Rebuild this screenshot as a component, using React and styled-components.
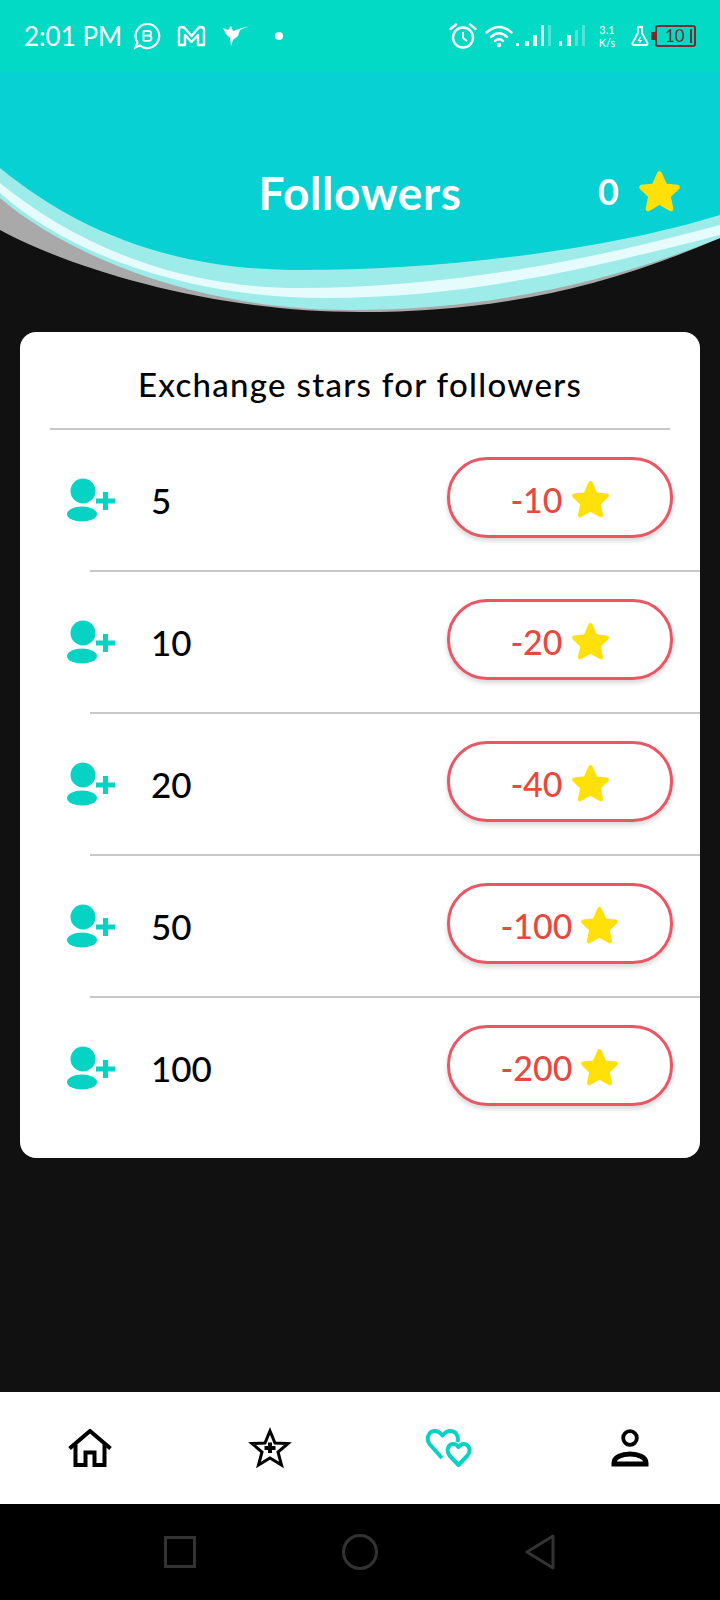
import React from 'react'
import styled, { createGlobalStyle } from 'styled-components'

const GlobalStyle = createGlobalStyle`
  html, body { margin: 0; padding: 0; background: #111111; }
  * { box-sizing: border-box; }
  body { font-family: Lato, "Open Sans", sans-serif; }
`

const Page = styled.div`
  width: 720px;
  height: 1600px;
  display: flex;
  flex-direction: column;
  background: #111111;
  overflow: hidden;
`

const StatusBar = styled.div`
  height: 72px;
  flex-shrink: 0;
  background: #02dac5;
  display: flex;
  align-items: center;
  padding: 0 24px 0 24px;
  color: #ffffff;
  position: relative;
  z-index: 1;
`

const Clock = styled.span`
  font-size: 26px;
  line-height: 1;
  margin-right: 11px;
  white-space: nowrap;
`

const StatusIcon = styled.svg`
  display: block;
  flex-shrink: 0;
  margin-left: ${(props) => props.$gap || 0}px;
`

const Grow = styled.div`
  flex: 1;
`

const Speed = styled.div`
  display: flex;
  flex-direction: column;
  align-items: center;
  font-size: 11px;
  line-height: 13px;
  margin-left: 10px;
  width: 22px;
`

const Battery = styled.div`
  width: 41px;
  height: 22px;
  margin-left: 6px;
  border: 2px solid #7a2a2c;
  border-radius: 3px;
  color: #7a2a2c;
  font-size: 17px;
  line-height: 18px;
  padding-left: 8px;
  position: relative;
  &::before {
    content: '';
    position: absolute;
    left: -6px;
    top: 5px;
    width: 4px;
    height: 8px;
    background: #7a2a2c;
  }
  &::after {
    content: '';
    position: absolute;
    right: 2px;
    top: 2px;
    width: 2px;
    height: 14px;
    background: #7a2a2c;
  }
`

const Header = styled.header`
  height: 260px;
  flex-shrink: 0;
  position: relative;
`

const Wave = styled.svg`
  position: absolute;
  left: 0;
  top: 0;
  display: block;
`

const HeaderRow = styled.div`
  position: relative;
  display: grid;
  grid-template-columns: 1fr auto 1fr;
  align-items: center;
  padding-top: 92px;
  color: #ffffff;
`

const Title = styled.h1`
  grid-column: 2;
  margin: 0;
  font-size: 46px;
  line-height: 58px;
  font-weight: 700;
  letter-spacing: 0.6px;
`

const Balance = styled.div`
  display: flex;
  justify-content: flex-end;
  align-items: center;
  gap: 19px;
  padding-right: 39px;
  padding-bottom: 4px;
  font-size: 36px;
  font-weight: 700;
`

const Card = styled.section`
  margin: 0 20px;
  background: #ffffff;
  border-radius: 16px;
  padding-bottom: 18px;
  overflow: hidden;
`

const CardTitle = styled.h2`
  margin: 0 30px;
  height: 98px;
  padding-top: 8px;
  display: flex;
  align-items: center;
  justify-content: center;
  border-bottom: 2px solid #c8c8c8;
  font-size: 33px;
  font-weight: 500;
  letter-spacing: 1.3px;
  color: #000000;
`

const Row = styled.div`
  position: relative;
  height: 142px;
  display: flex;
  align-items: center;
  padding: 0 27px 2px 46px;
  ${(props) => !props.$last && `
    &::after {
      content: '';
      position: absolute;
      left: 70px;
      right: 0;
      bottom: 0;
      height: 2px;
      background: #c8c8c8;
    }
  `}
`

const Count = styled.span`
  margin-left: 35px;
  flex: 1;
  font-size: 35px;
  font-weight: 500;
  color: #000000;
`

const ExchangeButton = styled.button`
  width: 226px;
  height: 81px;
  margin-bottom: 6px;
  border: 3.5px solid #ec5564;
  border-radius: 40px;
  background: #ffffff;
  box-shadow: 0 3px 5px rgba(0, 0, 0, 0.16);
  display: flex;
  align-items: center;
  justify-content: center;
  gap: 8px;
  padding: 4px 0 0;
  font-family: inherit;
  font-size: 34px;
  font-weight: 500;
  color: #e8493f;
`

const Spacer = styled.div`
  flex: 1;
`

const BottomNav = styled.nav`
  height: 112px;
  flex-shrink: 0;
  background: #ffffff;
  display: grid;
  grid-template-columns: repeat(4, 1fr);
  align-items: center;
  justify-items: center;
`

const SystemNav = styled.div`
  height: 96px;
  flex-shrink: 0;
  background: #000000;
  display: grid;
  grid-template-columns: 180px 180px 180px;
  justify-content: center;
  align-items: center;
  justify-items: center;
`

const NavIcon = styled.svg`
  display: block;
`

const Star = ({ size = 39 }) => (
  <svg width={size} height={size} viewBox="0 0 36 36" style={{ display: 'block', flexShrink: 0 }}>
    <polygon
      points="18,3 22.6,13.2 33,14.4 25.4,21.8 27.6,32.5 18,27 8.4,32.5 10.6,21.8 3,14.4 13.4,13.2"
      fill="#ffe009"
      stroke="#ffe009"
      strokeWidth="4"
      strokeLinejoin="round"
    />
  </svg>
)

const UserPlus = () => (
  <svg width="50" height="46" viewBox="0 0 50 46" style={{ display: 'block', flexShrink: 0 }}>
    <circle cx="17" cy="14" r="12.5" fill="#06d3c4" />
    <ellipse cx="16" cy="37" rx="15" ry="7.5" fill="#06d3c4" />
    <path d="M30 24 H49 M39.5 15 V33" stroke="#06d3c4" strokeWidth="5" />
  </svg>
)

const rows = [
  { count: 5, cost: -10 },
  { count: 10, cost: -20 },
  { count: 20, cost: -40 },
  { count: 50, cost: -100 },
  { count: 100, cost: -200 },
]

const App = () => {
  return (
    <Page>
      <GlobalStyle />
      <StatusBar>
        <Clock>2:01 PM</Clock>
        <StatusIcon width="28" height="28" viewBox="0 0 28 28">
          <path d="M14 2 A12 12 0 1 1 7 23.6 L2.5 25.5 L4.5 20.5 A12 12 0 0 1 14 2 Z" fill="none" stroke="#fff" strokeWidth="2.2" />
          <path d="M10.5 8.5 V19 M10.5 9 H15.5 Q18 9 18 11.2 Q18 13.6 15.5 13.6 H10.5 M15.5 13.6 Q18.5 13.6 18.5 16 Q18.5 18.8 15.5 18.8 H10.5" fill="none" stroke="#fff" strokeWidth="1.8" />
        </StatusIcon>
        <StatusIcon $gap={16} width="29" height="22" viewBox="0 0 29 22">
          <path d="M2 20 V5 Q2 2 5 2 Q7 2 8.5 4 L14.5 11 L20.5 4 Q22 2 24 2 Q27 2 27 5 V20 H21 V10 L14.5 17 L8 10 V20 Z" fill="none" stroke="#fff" strokeWidth="2.4" strokeLinejoin="round" />
        </StatusIcon>
        <StatusIcon $gap={17} width="26" height="22" viewBox="0 0 26 22">
          <path d="M0 3 L5 5 L8 1 L10 6 L16 4 L26 1 L17 5 L15 11 L10 15 L8 21 L7 13 L3 9 Z" fill="#fff" />
        </StatusIcon>
        <StatusIcon $gap={26} width="8" height="8" viewBox="0 0 8 8">
          <circle cx="4" cy="4" r="4" fill="#fff" />
        </StatusIcon>
        <Grow />
        <StatusIcon width="28" height="26" viewBox="0 0 28 26">
          <circle cx="14" cy="14.5" r="10" fill="none" stroke="#fff" strokeWidth="2.4" />
          <path d="M14 9 V15 L18 18" fill="none" stroke="#fff" strokeWidth="2" />
          <path d="M1.5 6 L7 1.5 M26.5 6 L21 1.5" stroke="#fff" strokeWidth="2.4" strokeLinecap="round" />
        </StatusIcon>
        <StatusIcon $gap={8} width="29" height="24" viewBox="0 0 29 24">
          <path d="M1.5 8.5 Q14 -2.5 26.5 8.5 M6 13 Q14 5.5 22 13 M10 17 Q14 13.5 18 17" fill="none" stroke="#fff" strokeWidth="2.4" strokeLinecap="round" />
          <circle cx="14" cy="21" r="2.2" fill="#fff" />
        </StatusIcon>
        <StatusIcon $gap={2} width="70" height="24" viewBox="0 0 70 24">
          <rect x="0" y="19" width="3" height="3" fill="#fff" />
          <rect x="9" y="17" width="4" height="5" fill="#fff" />
          <rect x="17" y="11" width="4" height="11" fill="#fff" />
          <rect x="25" y="1" width="3" height="21" fill="#fff" opacity="0.9" />
          <rect x="32" y="1" width="3" height="21" fill="#fff" opacity="0.3" />
          <rect x="43" y="17" width="3" height="5" fill="#fff" />
          <rect x="51" y="11" width="4" height="11" fill="#fff" />
          <rect x="59" y="6" width="3" height="16" fill="#fff" opacity="0.3" />
          <rect x="66" y="1" width="3" height="21" fill="#fff" opacity="0.3" />
        </StatusIcon>
        <Speed>
          <span>3.1</span>
          <span>K/s</span>
        </Speed>
        <StatusIcon $gap={13} width="18" height="20" viewBox="0 0 18 20">
          <path d="M6 1 H12 M7 1 V7 L1.5 17 Q1 19 3 19 H15 Q17 19 16.5 17 L11 7 V1" fill="none" stroke="#fff" strokeWidth="1.8" />
          <path d="M9.5 11 L7.5 14.5 H10 L8.5 17" fill="none" stroke="#fff" strokeWidth="1.2" />
        </StatusIcon>
        <Battery>10</Battery>
      </StatusBar>

      <Header>
        <Wave width="720" height="260" viewBox="0 72 720 260">
          <path d="M0 190 L0 230 C 70 268, 210 312, 360 312 C 490 312, 600 290, 720 238 Z" fill="#a9a9a9" />
          <path d="M0 165 L0 198 C 60 250, 190 310, 350 310 C 490 310, 610 282, 720 238 L720 210 Z" fill="#9decea" />
          <path d="M0 183 L0 193 C 70 255, 190 298, 325 298 C 470 298, 590 268, 720 235 L720 225 C 590 260, 450 288, 300 288 C 170 288, 70 240, 0 183 Z" fill="#e6fbfb" />
          <path d="M0 72 H720 V215 C 600 252, 430 271, 290 270 C 160 268, 70 225, 0 168 Z" fill="#08d1d3" />
        </Wave>
        <HeaderRow>
          <Title>Followers</Title>
          <Balance>
            0
            <Star size={43} />
          </Balance>
        </HeaderRow>
      </Header>

      <Card>
        <CardTitle>Exchange stars for followers</CardTitle>
        {rows.map((row, i) => (
          <Row key={row.count} $last={i === rows.length - 1}>
            <UserPlus />
            <Count>{row.count}</Count>
            <ExchangeButton>
              {row.cost}
              <Star />
            </ExchangeButton>
          </Row>
        ))}
      </Card>

      <Spacer />

      <BottomNav>
        <NavIcon width="44" height="38" viewBox="0 0 44 38">
          <path d="M1.5 19.5 L22 2 L42.5 19.5" fill="none" stroke="#000" strokeWidth="4" />
          <path d="M7.5 15.5 V36 H17.5 V23.5 H26.5 V36 H36.5 V15.5" fill="none" stroke="#000" strokeWidth="4" />
        </NavIcon>
        <NavIcon width="44" height="42" viewBox="0 0 44 42">
          <polygon points="22,4 27,16 40,16.5 30,25 33.5,38 22,31 10.5,38 14,25 4,16.5 17,16" fill="none" stroke="#000" strokeWidth="3" />
          <path d="M22 15.5 V26 M16.5 21 H27.5" stroke="#000" strokeWidth="4" />
        </NavIcon>
        <NavIcon width="48" height="38" viewBox="0 0 48 38">
          <path d="M16 29 L3.5 15 C-0.5 9 3 2 9 2 C12 2 14 3.5 16.5 6.5 C19 3.5 21 2 24 2 C30 2 33 7 31.5 13" fill="none" stroke="#06d3c4" strokeWidth="4" strokeLinejoin="round" />
          <path d="M32.5 36 L23.5 26.5 C19.5 21 22.5 15 27.5 15 C29.5 15 31 16 32.5 18 C34 16 35.5 15 37.5 15 C42.5 15 46 21 41.5 26.5 Z" fill="none" stroke="#06d3c4" strokeWidth="4" strokeLinejoin="round" />
        </NavIcon>
        <NavIcon width="38" height="38" viewBox="0 0 38 38">
          <circle cx="19" cy="9" r="6.8" fill="none" stroke="#000" strokeWidth="3.8" />
          <path d="M3 35 V34 C3 28 11 25 19 25 C27 25 35 28 35 34 V35 Z" fill="none" stroke="#000" strokeWidth="5" />
        </NavIcon>
      </BottomNav>

      <SystemNav>
        <NavIcon width="32" height="32" viewBox="0 0 32 32">
          <rect x="1.5" y="1.5" width="29" height="29" fill="none" stroke="#333333" strokeWidth="3" />
        </NavIcon>
        <NavIcon width="36" height="36" viewBox="0 0 36 36">
          <circle cx="18" cy="18" r="16.5" fill="none" stroke="#333333" strokeWidth="3" />
        </NavIcon>
        <NavIcon width="32" height="36" viewBox="0 0 32 36">
          <path d="M29 2 L3 18 L29 34 Z" fill="none" stroke="#333333" strokeWidth="3" strokeLinejoin="round" />
        </NavIcon>
      </SystemNav>
    </Page>
  )
}

export default App
